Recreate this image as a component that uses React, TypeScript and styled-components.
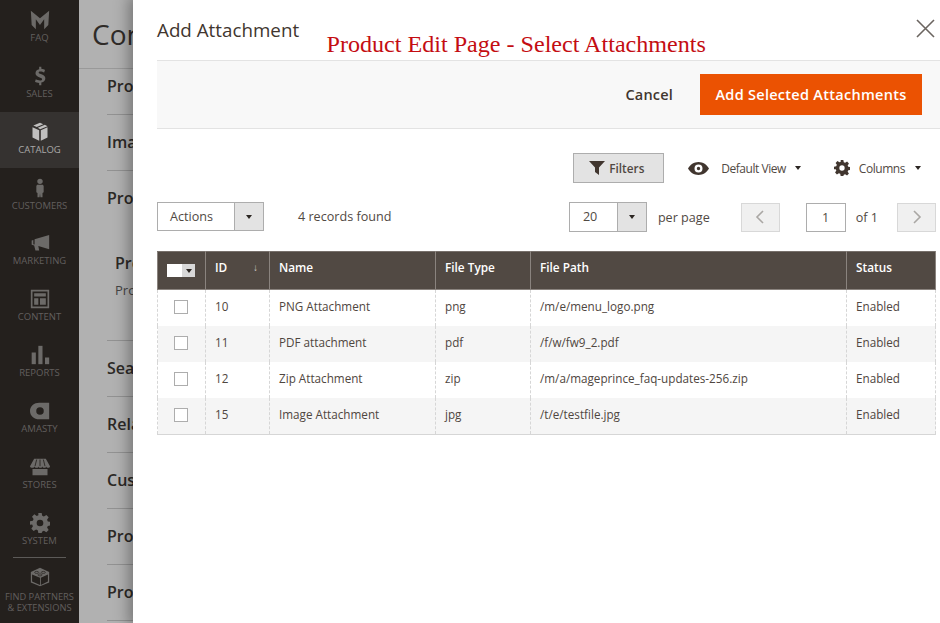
import styled, { createGlobalStyle } from "styled-components";
import type { ReactNode } from "react";

const GlobalStyle = createGlobalStyle`
  html, body { margin: 0; padding: 0; height: 100%; }
  body { font-family: "Open Sans", "Liberation Sans", sans-serif; color: #41362f; background: #fff; }
  #root { height: 100%; }
  * { box-sizing: border-box; }
`;

const Shell = styled.div`
  display: flex;
  width: 940px;
  height: 623px;
  overflow: hidden;
  position: relative;
`;

// --- sidebar ---

const Sidebar = styled.nav`
  width: 79px;
  flex: none;
  background: #24201d;
  display: flex;
  flex-direction: column;
`;

const NavItem = styled.div<{ $active?: boolean }>`
  height: 55.9px;
  flex: none;
  display: flex;
  flex-direction: column;
  align-items: center;
  justify-content: flex-end;
  padding-bottom: 12px;
  background: ${(p) => (p.$active ? "#353230" : "transparent")};
  color: ${(p) => (p.$active ? "#c0bfbe" : "#6c6a68")};
`;

const NavIcon = styled.svg`
  width: 20px;
  height: 20px;
  display: block;
  margin-bottom: 2px;
  fill: currentColor;
`;

const NavLabel = styled.span<{ $active?: boolean }>`
  font-size: 9.5px;
  line-height: 12px;
  text-transform: uppercase;
  text-align: center;
  white-space: nowrap;
  color: ${(p) => (p.$active ? "#a9a8a7" : "#625f5d")};
`;

const NavDivider = styled.div`
  height: 1px;
  flex: none;
  margin: -2px 13px 0;
  background: #5c5a58;
`;

const PartnersItem = styled(NavItem)`
  height: 66px;
  padding-bottom: 0;
  justify-content: flex-start;
  padding-top: 9px;
`;

const PartnersLabel = styled(NavLabel)`
  font-size: 9.3px;
  line-height: 11.500px;
  position: relative;
  top: 2px;
`;

// --- dimmed page behind the modal ---

const Backdrop = styled.div`
  width: 54px;
  flex: none;
  background: #b1b1b1;
  overflow: hidden;
  white-space: nowrap;
`;

const PageTitle = styled.div`
  height: 69px;
  padding: 15px 0 0 13px;
  font-size: 28px;
  line-height: 38px;
  color: #2f2b28;
  border-bottom: 1px solid #999;
`;

const Section = styled.div<{ $first?: boolean }>`
  margin-left: 28px;
  height: ${(p) => (p.$first ? 46 : 56)}px;
  padding-top: ${(p) => (p.$first ? 6 : 16)}px;
  font-size: 16px;
  line-height: 22px;
  font-weight: 600;
  color: #2c2926;
  border-bottom: 1px solid #929292;
`;

const TallSection = styled(Section)`
  height: 170px;
`;

const SubHeading = styled.div`
  margin: 43px 0 0 8px;
  font-size: 16px;
  line-height: 22px;
  font-weight: 600;
`;

const SubText = styled.div`
  margin: 7px 0 0 8px;
  font-size: 13px;
  line-height: 18px;
  font-weight: 400;
  color: #444;
`;

// --- modal ---

const Modal = styled.section`
  flex: 1;
  min-width: 0;
  background: #fff;
  box-shadow: 0 0 14px 4px rgba(0, 0, 0, 0.35);
  padding-left: 24px;
  display: flex;
  flex-direction: column;
  position: relative;
`;

const ModalHeader = styled.header`
  height: 60px;
  flex: none;
  padding-top: 17px;
  display: flex;
  justify-content: space-between;
`;

const ModalTitle = styled.h1`
  margin: 0;
  font-size: 18.8px;
  line-height: 26px;
  font-weight: 400;
  color: #41362f;
`;

const CloseButton = styled.svg`
  width: 19px;
  height: 19px;
  margin: 2px 5px 0 0;
  stroke: #6b6560;
  stroke-width: 1.6;
  fill: none;
`;

const Annotation = styled.div`
  position: absolute;
  left: 193.5px;
  top: 30px;
  font-family: "Liberation Serif", serif;
  font-size: 24.1px;
  line-height: 28px;
  white-space: nowrap;
  color: #c40d12;
`;

const ActionBar = styled.div`
  height: 69px;
  flex: none;
  background: #f8f8f8;
  border-top: 1px solid #e3e3e3;
  border-bottom: 1px solid #e3e3e3;
  display: flex;
  align-items: center;
  justify-content: flex-end;
  padding-right: 18px;
  gap: 27px;
`;

const CancelButton = styled.span`
  font-size: 14.5px;
  font-weight: 600;
  letter-spacing: 0.2px;
  color: #41362f;
`;

const PrimaryButton = styled.span`
  width: 222px;
  height: 41px;
  background: #eb5202;
  color: #fff;
  font-size: 14.5px;
  font-weight: 600;
  letter-spacing: 0.28px;
  display: flex;
  align-items: center;
  justify-content: center;
`;

const Content = styled.div`
  padding-right: 4px;
`;

const ToolRow = styled.div`
  height: 30px;
  margin-top: 24px;
  display: flex;
  align-items: center;
  justify-content: flex-end;
`;

const FiltersButton = styled.span`
  width: 91px;
  height: 30px;
  padding-left: 15px;
  background: #e3e3e3;
  border: 1px solid #adadad;
  display: flex;
  align-items: center;
  gap: 4px;
  font-size: 11.8px;
  font-weight: 600;
  color: #514943;
  margin-right: 24px;
`;

const ToolIcon = styled.svg<{ $w: number; $h: number }>`
  width: ${(p) => p.$w}px;
  height: ${(p) => p.$h}px;
  fill: #41362f;
  flex: none;
`;

const ToolLink = styled.span<{ $gap: number; $tail: number }>`
  display: flex;
  align-items: center;
  gap: ${(p) => p.$gap}px;
  margin-right: ${(p) => p.$tail}px;
  font-size: 12px;
  letter-spacing: -0.46px;
  color: #514943;
`;

const Caret = styled.i`
  display: block;
  width: 0;
  height: 0;
  border-style: solid;
  border-width: 4px 3.5px 0;
  border-color: #2b2622 transparent transparent;
  flex: none;
`;

const ToolCaret = styled(Caret)<{ $left: number }>`
  margin-left: ${(p) => p.$left}px;
`;

const PagerRow = styled.div`
  height: 30px;
  margin-top: 19px;
  display: flex;
  align-items: center;
`;

const SelectBox = styled.div<{ $width: number }>`
  width: ${(p) => p.$width}px;
  height: 30px;
  display: flex;
  border: 1px solid #adadad;
  background: #fff;
`;

const ActionsBox = styled(SelectBox)`
  height: 29px;
  align-self: flex-start;
`;

const SelectValue = styled.span<{ $pad: number }>`
  flex: 1;
  font-size: 12.6px;
  line-height: 27px;
  padding-left: ${(p) => p.$pad}px;
  color: #514943;
`;

const SelectArrow = styled.span`
  width: 29px;
  flex: none;
  background: #e3e3e3;
  border-left: 1px solid #adadad;
  display: flex;
  align-items: center;
  justify-content: center;
`;

const Records = styled.span`
  margin: 0 0 2px 34px;
  font-size: 12.6px;
  color: #514943;
`;

const Spacer = styled.div`
  flex: 1;
`;

const PagerText = styled.span<{ $left: number }>`
  margin-left: ${(p) => p.$left}px;
  font-size: 12.6px;
  color: #514943;
`;

const PageButton = styled.span<{ $left: number }>`
  width: 39px;
  height: 29px;
  margin-left: ${(p) => p.$left}px;
  background: #f0f0f0;
  border: 1px solid #d8d8d8;
  display: flex;
  align-items: center;
  justify-content: center;
`;

const Chevron = styled.svg`
  width: 10px;
  height: 14px;
  fill: none;
  stroke: #aaa7a4;
  stroke-width: 1.6;
`;

const PageInput = styled.span`
  width: 40px;
  height: 29px;
  margin-left: 26px;
  border: 1px solid #adadad;
  font-size: 12.6px;
  line-height: 27px;
  text-align: center;
  color: #514943;
`;

// --- grid ---

const Grid = styled.table`
  width: 778px;
  margin-top: 19px;
  border-collapse: collapse;
  table-layout: fixed;
  font-size: 11.7px;
  color: #4f4640;
`;

const HeadCell = styled.th`
  height: 38px;
  padding: 0 9px 7px;
  background: #514943;
  border: 1px solid #8a837e;
  border-top-color: #77706b;
  text-align: left;
  font-size: 11.8px;
  font-weight: 600;
  color: #fff;
`;

const CheckHeadCell = styled(HeadCell)`
  padding-bottom: 0;
`;

const HeadInner = styled.div`
  display: flex;
  align-items: center;
  justify-content: space-between;
`;

const SortArrow = styled.span`
  font-size: 10px;
  font-weight: 400;
  color: #cfcac6;
  margin-right: 2px;
`;

const HeadCheck = styled.div`
  width: 28px;
  height: 13px;
  display: flex;
`;

const HeadCheckBox = styled.span`
  flex: 1;
  background: #fff;
`;

const HeadCheckArrow = styled.span`
  width: 13px;
  background: #d8d8d8;
  display: flex;
  align-items: center;
  justify-content: center;
`;

const Row = styled.tr<{ $odd: boolean }>`
  background: ${(p) => (p.$odd ? "#f5f5f5" : "#fff")};

  &:last-child td {
    height: 37px;
  }
`;

const Cell = styled.td`
  height: 36px;
  padding: 0 9px 4px;
  border-left: 1px dashed #d6d6d6;
  border-right: 1px dashed #d6d6d6;
  white-space: nowrap;
`;

const CheckCell = styled(Cell)`
  padding-bottom: 2px;
`;

const GridBody = styled.tbody`
  border-bottom: 1px solid #d6d6d6;
`;

const CheckBox = styled.div`
  width: 14px;
  height: 14px;
  margin-left: 7px;
  background: #fff;
  border: 1px solid #adadad;
`;

const navItems: { label: string; icon: ReactNode; active?: boolean }[] = [
  { label: "FAQ", icon: <path d="M1 1l11 9 11-9-1 17-5 5V11l-5 7-5-7v12l-5-5z" /> },
  {
    label: "Sales",
    icon: (
      <path d="M11 1h2.600v2.400c2 .2 3.400.8 4.400 1.400l-1 3c-1.200-.7-2.800-1.300-4.500-1.300-1.500 0-2.100.6-2.100 1.300 0 .8.9 1.300 3.300 2.200 3.200 1.100 4.700 2.500 4.700 5 0 2.300-1.600 4.200-4.800 4.700V23H11v-2.600c-2-.2-3.900-.8-5-1.500l1-3c1.300.7 3.100 1.400 5 1.400 1.600 0 2.500-.6 2.500-1.500s-.8-1.400-2.800-2.100c-3-1-5.100-2.400-5.100-5 0-2.400 1.700-4.300 4.400-4.700z" />
    ),
  },
  {
    label: "Catalog",
    active: true,
    icon: (
      <>
        <path d="M12 1l4 1.600-8 3.400-4-1.800z" />
        <path d="M17.800 3.400L21 5l-8.800 3.600L9.400 7z" />
        <path d="M3 6.400l8 3.600v12.500l-8-3.800z" />
        <path d="M21 6.400v12.300l-8 3.800V10z" />
      </>
    ),
  },
  {
    label: "Customers",
    icon: (
      <path d="M12 1c2 0 3.300 1.400 3.300 3.200S14 7.200 12 7.200 8.700 6 8.700 4.200 10 1 12 1zM8.500 8h7l.9 1.500v7.500l-1.400 1v5h-2.500l-.5-4.500-.5 4.500H9v-5l-1.400-1V9.500z" />
    ),
  },
  {
    label: "Marketing",
    icon: <path d="M23 2.500v17L10 15.500l1 5.500H6.500L5 15l-3-1V9l2-.6v5l1.500.4V7.500z" />,
  },
  {
    label: "Content",
    icon: (
      <path
        fillRule="evenodd"
        d="M1 1h22v22H1zM3 3v18h18V3zM5 5h14v4H5zM5 11h5v8H5zM12 11h7v8h-7z"
      />
    ),
  },
  {
    label: "Reports",
    icon: (
      <>
        <rect x="2" y="9" width="5" height="14" />
        <rect x="10" y="1" width="5" height="22" />
        <rect x="18" y="15" width="5" height="8" />
      </>
    ),
  },
  {
    label: "Amasty",
    icon: (
      <path
        fillRule="evenodd"
        d="M11 2h12v20H11C5 22 0 18 0 12S5 2 11 2zM12 7.500a4.500 4.500 0 100 9 4.500 4.500 0 000-9z"
      />
    ),
  },
  {
    label: "Stores",
    icon: (
      <>
        <path d="M5 2h14l5 9c0 1.200-1 2-2.300 2s-2.200-.8-2.200-2c0 1.200-1 2-2.300 2s-2.400-.8-2.400-2c0 1.200-1 2-2.300 2s-2.200-.8-2.200-2c0 1.200-1 2-2.300 2S5.200 12.200 5.200 11c0 1.200-1 2-2.300 2S0 12.200 0 11zM3 14.500h18V22H3z" />
        <path d="M8 3l-2 8M12 3v8M16 3l2 8" stroke="#24201d" strokeWidth="1" />
      </>
    ),
  },
  {
    label: "System",
    icon: (
      <path
        fillRule="evenodd"
        d="M10 0h4l.7 3.400 2 .9 2.900-1.900 2.800 2.800-1.900 2.900.9 2 3.400.7v4l-3.400.7-.9 2 1.900 2.900-2.800 2.800-2.900-1.900-2 .9L14 24h-4l-.7-3.400-2-.9-2.900 1.900-2.800-2.800 1.900-2.900-.9-2L0 14v-4l3.400-.7.9-2L2.400 4.400l2.800-2.800 2.900 1.900 2-.9zM12 8a4 4 0 100 8 4 4 0 000-8z"
      />
    ),
  },
];

const rows = [
  { id: 10, name: "PNG Attachment", type: "png", path: "/m/e/menu_logo.png" },
  { id: 11, name: "PDF attachment", type: "pdf", path: "/f/w/fw9_2.pdf" },
  { id: 12, name: "Zip Attachment", type: "zip", path: "/m/a/mageprince_faq-updates-256.zip" },
  { id: 15, name: "Image Attachment", type: "jpg", path: "/t/e/testfile.jpg" },
];

export default function App() {
  return (
    <Shell>
      <GlobalStyle />
      <Sidebar>
        {navItems.map((item) => (
          <NavItem key={item.label} $active={item.active}>
            <NavIcon viewBox="0 0 24 24">{item.icon}</NavIcon>
            <NavLabel $active={item.active}>{item.label}</NavLabel>
          </NavItem>
        ))}
        <NavDivider />
        <PartnersItem>
          <NavIcon viewBox="0 0 24 24">
            <path d="M12 1l11 5v12.500L12 23 1 18.500V6zM12 13L2.500 9v8.500L12 21.500zM21.500 9L13 13v8.500l8.500-4z" />
            <ellipse cx="8" cy="6.500" rx="2.500" ry="1.200" fill="none" stroke="#24201d" strokeWidth="0.8" />
            <ellipse cx="16" cy="6.500" rx="2.500" ry="1.200" fill="none" stroke="#24201d" strokeWidth="0.8" />
            <ellipse cx="12" cy="9.500" rx="2.500" ry="1.200" fill="none" stroke="#24201d" strokeWidth="0.8" />
          </NavIcon>
          <PartnersLabel>Find Partners</PartnersLabel>
          <PartnersLabel>&amp; Extensions</PartnersLabel>
        </PartnersItem>
      </Sidebar>

      <Backdrop>
        <PageTitle>Configurable</PageTitle>
        <Section $first>Product</Section>
        <Section>Images</Section>
        <TallSection>
          Product
          <SubHeading>Product</SubHeading>
          <SubText>Product</SubText>
        </TallSection>
        <Section>Search</Section>
        <Section>Related</Section>
        <Section>Customizable</Section>
        <Section>Product</Section>
        <Section>Product</Section>
      </Backdrop>

      <Modal>
        <ModalHeader>
          <ModalTitle>Add Attachment</ModalTitle>
          <CloseButton viewBox="0 0 19 19">
            <path d="M1 1l17 17M18 1L1 18" />
          </CloseButton>
        </ModalHeader>
        <Annotation>Product Edit Page - Select Attachments</Annotation>
        <ActionBar>
          <CancelButton>Cancel</CancelButton>
          <PrimaryButton>Add Selected Attachments</PrimaryButton>
        </ActionBar>

        <Content>
          <ToolRow>
            <FiltersButton>
              <ToolIcon $w={16} $h={14} viewBox="0 0 16 14">
                <path d="M0 0h16L10 6.500V14L6 11V6.500z" />
              </ToolIcon>
              Filters
            </FiltersButton>
            <ToolLink $gap={12} $tail={33}>
              <ToolIcon $w={21} $h={13} viewBox="0 0 21 13">
                <path
                  fillRule="evenodd"
                  d="M10.500 0C15 0 19 2.800 21 6.500 19 10.200 15 13 10.500 13S2 10.200 0 6.500C2 2.800 6 0 10.500 0zM10.500 2.500a4 4 0 100 8 4 4 0 000-8zM10.500 4.800a1.700 1.700 0 110 3.400 1.700 1.700 0 010-3.400z"
                />
              </ToolIcon>
              Default View
              <ToolCaret $left={-3} />
            </ToolLink>
            <ToolLink $gap={9} $tail={15}>
              <ToolIcon $w={16} $h={16} viewBox="0 0 24 24">
                <path
                  fillRule="evenodd"
                  d="M10 0h4l.7 3.400 2 .9 2.900-1.900 2.800 2.800-1.900 2.900.9 2 3.400.7v4l-3.400.7-.9 2 1.900 2.900-2.800 2.800-2.900-1.900-2 .9L14 24h-4l-.7-3.400-2-.9-2.900 1.900-2.800-2.800 1.900-2.900-.9-2L0 14v-4l3.400-.7.9-2L2.400 4.400l2.800-2.800 2.900 1.900 2-.9zM12 8a4 4 0 100 8 4 4 0 000-8z"
                />
              </ToolIcon>
              Columns
              <ToolCaret $left={1} />
            </ToolLink>
          </ToolRow>

          <PagerRow>
            <ActionsBox $width={107}>
              <SelectValue $pad={12}>Actions</SelectValue>
              <SelectArrow>
                <Caret />
              </SelectArrow>
            </ActionsBox>
            <Records>4 records found</Records>
            <Spacer />
            <SelectBox $width={78}>
              <SelectValue $pad={13}>20</SelectValue>
              <SelectArrow>
                <Caret />
              </SelectArrow>
            </SelectBox>
            <PagerText $left={11}>per page</PagerText>
            <PageButton $left={31}>
              <Chevron viewBox="0 0 10 14">
                <path d="M8 1L2 7l6 6" />
              </Chevron>
            </PageButton>
            <PageInput>1</PageInput>
            <PagerText $left={10}>of 1</PagerText>
            <PageButton $left={19}>
              <Chevron viewBox="0 0 10 14">
                <path d="M2 1l6 6-6 6" />
              </Chevron>
            </PageButton>
          </PagerRow>

          <Grid>
            <colgroup>
              <col width={48} />
              <col width={64} />
              <col width={166} />
              <col width={95} />
              <col width={316} />
              <col width={89} />
            </colgroup>
            <thead>
              <tr>
                <CheckHeadCell>
                  <HeadCheck>
                    <HeadCheckBox />
                    <HeadCheckArrow>
                      <Caret />
                    </HeadCheckArrow>
                  </HeadCheck>
                </CheckHeadCell>
                <HeadCell>
                  <HeadInner>
                    ID
                    <SortArrow>↓</SortArrow>
                  </HeadInner>
                </HeadCell>
                <HeadCell>Name</HeadCell>
                <HeadCell>File Type</HeadCell>
                <HeadCell>File Path</HeadCell>
                <HeadCell>Status</HeadCell>
              </tr>
            </thead>
            <GridBody>
              {rows.map((row, i) => (
                <Row key={row.id} $odd={i % 2 === 1}>
                  <CheckCell>
                    <CheckBox />
                  </CheckCell>
                  <Cell>{row.id}</Cell>
                  <Cell>{row.name}</Cell>
                  <Cell>{row.type}</Cell>
                  <Cell>{row.path}</Cell>
                  <Cell>Enabled</Cell>
                </Row>
              ))}
            </GridBody>
          </Grid>
        </Content>
      </Modal>
    </Shell>
  );
}
